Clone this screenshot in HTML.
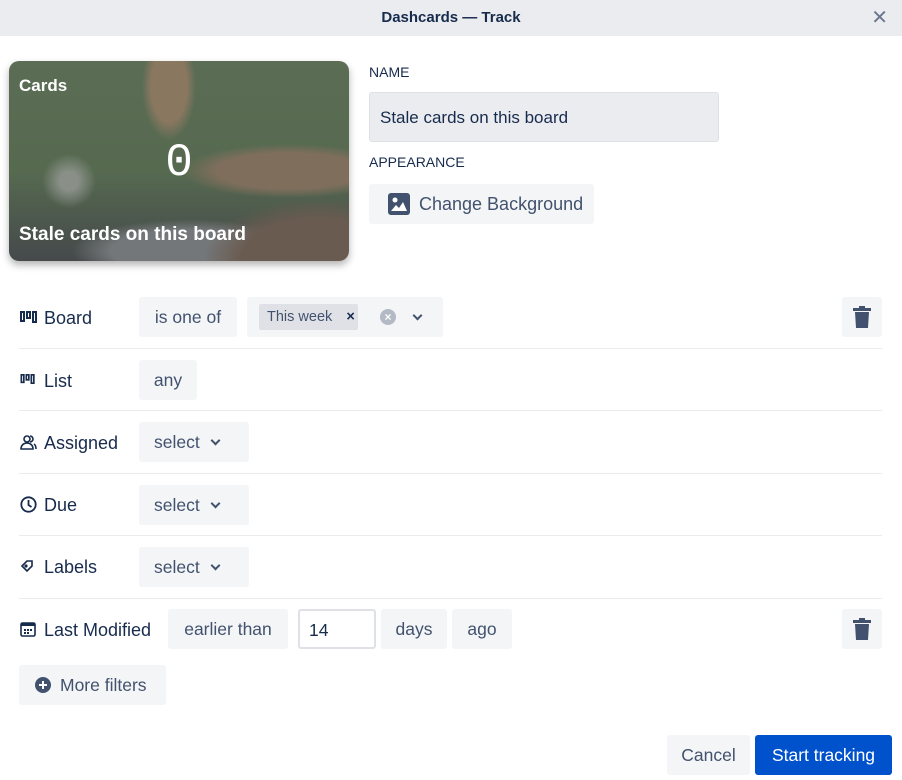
<!DOCTYPE html>
<html><head><style>
*{box-sizing:border-box;margin:0;padding:0}
body{width:902px;height:780px;background:#fff;font-family:"Liberation Sans",sans-serif;color:#172b4d;position:relative;overflow:hidden}
.hdr{position:absolute;left:0;top:0;width:902px;height:36px;background:#ebecf0;text-align:center;line-height:36px;font-size:15px;font-weight:bold;color:#172b4d}
.x{position:absolute;right:14px;top:0;font-size:20px;font-weight:normal;color:#6b778c}
.card{position:absolute;left:9px;top:61px;width:340px;height:200px;border-radius:10px;overflow:hidden;box-shadow:0 4px 8px rgba(0,0,0,.3);
background:radial-gradient(ellipse 30px 60px at 160px 25px,#8a7760 60%,transparent 90%),radial-gradient(ellipse 120px 30px at 280px 110px,#7f6e5c 60%,transparent 90%),radial-gradient(ellipse 130px 70px at 310px 200px,#6a5b50 60%,transparent 90%),radial-gradient(ellipse 130px 35px at 180px 190px,#74777a 60%,transparent 90%),radial-gradient(ellipse 30px 30px at 60px 120px,#8a9088 30%,transparent 90%),linear-gradient(#5b6d55,#566a50 55%,#45494b)}
.card .t{position:absolute;left:10px;top:15px;color:#fff;font-weight:bold;font-size:17px}
.card .n{position:absolute;left:0;width:100%;top:76px;text-align:center;color:#fff;font-family:"Liberation Mono",monospace;font-size:46px}
.card .b{position:absolute;left:10px;top:163px;color:#fff;font-weight:bold;font-size:19px}
.lbl{position:absolute;left:369px;font-size:14px;color:#172b4d}
.inp{position:absolute;left:369px;top:92px;width:350px;height:50px;background:#ebecf0;border:1px solid #dfe1e6;border-radius:3px;font-size:17px;padding:15px 10px}
.btn{position:absolute;background:#f4f5f7;border-radius:3px;font-size:17.5px;color:#42526e;text-align:center}
.row{position:absolute;left:19px;width:863px;border-bottom:1px solid #ebecf0}
.rl{position:absolute;left:44px;font-size:18px;color:#172b4d}
.ic{position:absolute;left:20px;font-size:14px}
.chev{display:inline-block;width:7px;height:7px;border-right:2px solid #42526e;border-bottom:2px solid #42526e;transform:rotate(45deg);margin-left:12px;position:relative;top:-4px}
.trash{position:absolute;left:842px;width:40px;height:40px;background:#f4f5f7;border-radius:3px}
</style></head><body>
<div class="hdr">Dashcards — Track<span class="x">✕</span></div>
<div class="card"><div class="t">Cards</div><div class="n">0</div><div class="b">Stale cards on this board</div></div>
<div class="lbl" style="top:64px">NAME</div>
<div class="inp">Stale cards on this board</div>
<div class="lbl" style="top:154px">APPEARANCE</div>
<div class="btn" style="left:369px;top:184px;width:225px;height:40px;line-height:40px;text-align:left;padding-left:50px;font-size:18px">Change Background</div>
<svg style="position:absolute;left:388px;top:193px" width="22" height="22" viewBox="0 0 22 22"><rect width="22" height="22" rx="3" fill="#42526e"/><circle cx="7" cy="7" r="2.5" fill="#fff"/><path d="M3 18l5-6 3 3 4-6 4 9z" fill="#fff"/></svg>

<div class="row" style="top:297px;height:52px"></div>
<div class="row" style="top:349px;height:62px"></div>
<div class="row" style="top:411px;height:63px"></div>
<div class="row" style="top:474px;height:62px"></div>
<div class="row" style="top:536px;height:63px"></div>

<svg class="ic" style="top:311px" width="18" height="12" viewBox="0 0 18 12"><g fill="none" stroke="#172b4d" stroke-width="2"><rect x="1" y="1" width="3" height="9"/><rect x="7" y="1" width="3" height="6"/><rect x="13" y="1" width="3" height="10"/></g></svg>
<div class="rl" style="top:308px">Board</div>
<div class="btn" style="left:139px;top:297px;width:98px;height:40px;line-height:40px">is one of</div>
<div class="btn" style="left:247px;top:297px;width:196px;height:40px"></div>
<div style="position:absolute;left:259px;top:304px;width:99px;height:26px;background:#dfe1e6;border-radius:2px;font-size:14.5px;line-height:26px;padding-left:8px;color:#42526e">This week <b style="margin-left:10px;color:#172b4d">×</b></div>
<div style="position:absolute;left:380px;top:309px;width:16px;height:16px;border-radius:50%;background:#b3bac5;color:#fff;font-size:12px;line-height:16px;text-align:center;font-weight:bold">×</div>
<span class="chev" style="position:absolute;left:402px;top:312px"></span>
<div class="trash" style="top:297px"></div>
<svg style="position:absolute;left:852px;top:306px" width="20" height="22" viewBox="0 0 20 22"><rect x="1" y="2" width="18" height="3" fill="#42526e"/><rect x="7" y="0" width="6" height="3" fill="#42526e"/><path d="M3 6h14l-1 16H4z" fill="#42526e"/></svg>

<svg class="ic" style="top:374px" width="16" height="10" viewBox="0 0 18 12"><g fill="none" stroke="#172b4d" stroke-width="2"><rect x="1" y="1" width="3" height="9"/><rect x="7" y="1" width="3" height="6"/><rect x="13" y="1" width="3" height="10"/></g></svg>
<div class="rl" style="top:371px">List</div>
<div class="btn" style="left:139px;top:360px;width:58px;height:40px;line-height:40px">any</div>

<svg class="ic" style="top:434px" width="17" height="17" viewBox="0 0 17 17"><g fill="none" stroke="#172b4d" stroke-width="1.6"><circle cx="7" cy="5" r="3"/><path d="M1 15c0-4 3-6 6-6s6 2 6 6z"/><path d="M10 2a3 3 0 010 6M14 10c1.5 1 2 3 2 5"/></g></svg>
<div class="rl" style="top:433px">Assigned</div>
<div class="btn" style="left:139px;top:422px;width:110px;height:40px;line-height:40px;text-align:left;padding-left:15px">select<span class="chev"></span></div>

<svg class="ic" style="top:496px" width="17" height="17" viewBox="0 0 17 17"><g fill="none" stroke="#172b4d" stroke-width="1.8"><circle cx="8.5" cy="8.5" r="7.2"/><path d="M8.5 4v5l3 2"/></g></svg>
<div class="rl" style="top:495px">Due</div>
<div class="btn" style="left:139px;top:485px;width:110px;height:40px;line-height:40px;text-align:left;padding-left:15px">select<span class="chev"></span></div>

<svg class="ic" style="top:559px" width="14" height="14" viewBox="0 0 14 14"><path d="M2 7L7 2h5v5L7 12z" fill="none" stroke="#172b4d" stroke-width="1.6"/><circle cx="6" cy="7" r="1.6" fill="#172b4d"/></svg>
<div class="rl" style="top:557px">Labels</div>
<div class="btn" style="left:139px;top:547px;width:110px;height:40px;line-height:40px;text-align:left;padding-left:15px">select<span class="chev"></span></div>

<svg class="ic" style="top:621px" width="16" height="16" viewBox="0 0 16 16"><rect x="1" y="2" width="14" height="13" rx="1.5" fill="none" stroke="#172b4d" stroke-width="1.6"/><rect x="1" y="2" width="14" height="3" fill="#172b4d"/><g fill="#172b4d"><rect x="4" y="8" width="2" height="2"/><rect x="7" y="8" width="2" height="2"/><rect x="10" y="8" width="2" height="2"/><rect x="4" y="11" width="2" height="2"/><rect x="7" y="11" width="2" height="2"/></g></svg>
<div class="rl" style="top:620px">Last Modified</div>
<div class="btn" style="left:168px;top:609px;width:120px;height:40px;line-height:40px">earlier than</div>
<div style="position:absolute;left:298px;top:609px;width:78px;height:40px;border:2px solid #dfe1e6;border-radius:3px;font-size:17.5px;padding:9px 9px">14</div>
<div class="btn" style="left:381px;top:609px;width:66px;height:40px;line-height:40px">days</div>
<div class="btn" style="left:452px;top:609px;width:60px;height:40px;line-height:40px">ago</div>
<div class="trash" style="top:609px"></div>
<svg style="position:absolute;left:852px;top:618px" width="20" height="22" viewBox="0 0 20 22"><rect x="1" y="2" width="18" height="3" fill="#42526e"/><rect x="7" y="0" width="6" height="3" fill="#42526e"/><path d="M3 6h14l-1 16H4z" fill="#42526e"/></svg>

<div class="btn" style="left:19px;top:665px;width:147px;height:40px;line-height:40px;text-align:left;padding-left:41px">More filters</div>
<svg style="position:absolute;left:35px;top:677px" width="16" height="16" viewBox="0 0 16 16"><circle cx="8" cy="8" r="8" fill="#42526e"/><path d="M8 4v8M4 8h8" stroke="#fff" stroke-width="2"/></svg>

<div class="btn" style="left:667px;top:735px;width:83px;height:40px;line-height:40px">Cancel</div>
<div class="btn" style="left:755px;top:735px;width:137px;height:40px;line-height:40px;background:#0052cc;color:#fff">Start tracking</div>
</body></html>
